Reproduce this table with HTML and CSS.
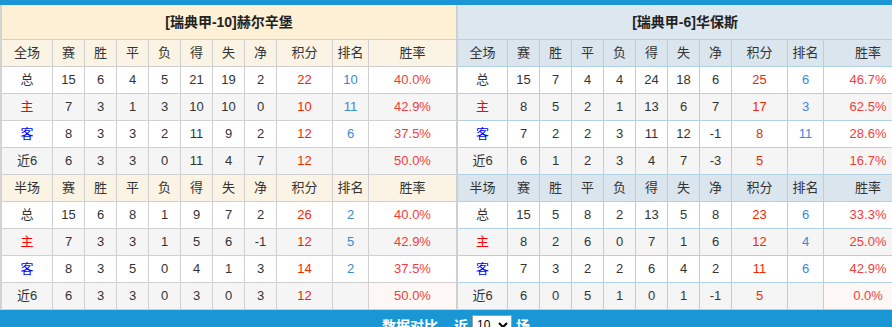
FILE: index.html
```html
<!DOCTYPE html>
<html lang="zh-CN">

<head>
    <meta charset="UTF-8">
    <meta name="viewport" content="width=device-width, initial-scale=1.0">
    <title>数据对比</title>
    <link rel="stylesheet" href="styles.css">
</head>

<body>
    <div class="wrap">
        <div class="topbar"></div>
        <div class="panels">
            <table class="stat home">
                <colgroup>
                    <col class="c-name"><col class="c-num"><col class="c-num"><col class="c-num"><col class="c-num"><col class="c-num"><col class="c-num"><col class="c-num"><col class="c-pts"><col class="c-rank"><col class="c-rate">
                </colgroup>
                <tr class="title"><th colspan="11">[瑞典甲-10]赫尔辛堡</th></tr>
                <tr class="head"><td>全场</td><td>赛</td><td>胜</td><td>平</td><td>负</td><td>得</td><td>失</td><td>净</td><td>积分</td><td>排名</td><td>胜率</td></tr>
                <tr><td>总</td><td>15</td><td>6</td><td>4</td><td>5</td><td>21</td><td>19</td><td>2</td><td class="pts">22</td><td class="rank">10</td><td class="rate">40.0%</td></tr>
                <tr class="alt"><td class="zhu">主</td><td>7</td><td>3</td><td>1</td><td>3</td><td>10</td><td>10</td><td>0</td><td class="pts">10</td><td class="rank">11</td><td class="rate">42.9%</td></tr>
                <tr><td class="ke">客</td><td>8</td><td>3</td><td>3</td><td>2</td><td>11</td><td>9</td><td>2</td><td class="pts">12</td><td class="rank">6</td><td class="rate">37.5%</td></tr>
                <tr class="alt"><td>近6</td><td>6</td><td>3</td><td>3</td><td>0</td><td>11</td><td>4</td><td>7</td><td class="pts">12</td><td class="rank"></td><td class="rate">50.0%</td></tr>
                <tr class="head"><td>半场</td><td>赛</td><td>胜</td><td>平</td><td>负</td><td>得</td><td>失</td><td>净</td><td>积分</td><td>排名</td><td>胜率</td></tr>
                <tr><td>总</td><td>15</td><td>6</td><td>8</td><td>1</td><td>9</td><td>7</td><td>2</td><td class="pts">26</td><td class="rank">2</td><td class="rate">40.0%</td></tr>
                <tr class="alt"><td class="zhu">主</td><td>7</td><td>3</td><td>3</td><td>1</td><td>5</td><td>6</td><td>-1</td><td class="pts">12</td><td class="rank">5</td><td class="rate">42.9%</td></tr>
                <tr><td class="ke">客</td><td>8</td><td>3</td><td>5</td><td>0</td><td>4</td><td>1</td><td>3</td><td class="pts">14</td><td class="rank">2</td><td class="rate">37.5%</td></tr>
                <tr class="alt"><td>近6</td><td>6</td><td>3</td><td>3</td><td>0</td><td>3</td><td>0</td><td>3</td><td class="pts">12</td><td class="rank"></td><td class="rate hl">50.0%</td></tr>
            </table>
            <table class="stat away">
                <colgroup>
                    <col class="c-name2"><col class="c-num"><col class="c-num"><col class="c-num"><col class="c-num"><col class="c-num"><col class="c-num"><col class="c-num"><col class="c-pts"><col class="c-rank"><col class="c-rate">
                </colgroup>
                <tr class="title"><th colspan="11">[瑞典甲-6]华保斯</th></tr>
                <tr class="head"><td>全场</td><td>赛</td><td>胜</td><td>平</td><td>负</td><td>得</td><td>失</td><td>净</td><td>积分</td><td>排名</td><td>胜率</td></tr>
                <tr><td>总</td><td>15</td><td>7</td><td>4</td><td>4</td><td>24</td><td>18</td><td>6</td><td class="pts">25</td><td class="rank">6</td><td class="rate">46.7%</td></tr>
                <tr class="alt"><td class="zhu">主</td><td>8</td><td>5</td><td>2</td><td>1</td><td>13</td><td>6</td><td>7</td><td class="pts">17</td><td class="rank">3</td><td class="rate">62.5%</td></tr>
                <tr><td class="ke">客</td><td>7</td><td>2</td><td>2</td><td>3</td><td>11</td><td>12</td><td>-1</td><td class="pts">8</td><td class="rank">11</td><td class="rate">28.6%</td></tr>
                <tr class="alt"><td>近6</td><td>6</td><td>1</td><td>2</td><td>3</td><td>4</td><td>7</td><td>-3</td><td class="pts">5</td><td class="rank"></td><td class="rate">16.7%</td></tr>
                <tr class="head"><td>半场</td><td>赛</td><td>胜</td><td>平</td><td>负</td><td>得</td><td>失</td><td>净</td><td>积分</td><td>排名</td><td>胜率</td></tr>
                <tr><td>总</td><td>15</td><td>5</td><td>8</td><td>2</td><td>13</td><td>5</td><td>8</td><td class="pts">23</td><td class="rank">6</td><td class="rate">33.3%</td></tr>
                <tr class="alt"><td class="zhu">主</td><td>8</td><td>2</td><td>6</td><td>0</td><td>7</td><td>1</td><td>6</td><td class="pts">12</td><td class="rank">4</td><td class="rate">25.0%</td></tr>
                <tr><td class="ke">客</td><td>7</td><td>3</td><td>2</td><td>2</td><td>6</td><td>4</td><td>2</td><td class="pts">11</td><td class="rank">6</td><td class="rate">42.9%</td></tr>
                <tr class="alt"><td>近6</td><td>6</td><td>0</td><td>5</td><td>1</td><td>0</td><td>1</td><td>-1</td><td class="pts">5</td><td class="rank"></td><td class="rate hl">0.0%</td></tr>
            </table>
        </div>
        <div class="bottom">
            <span class="label">数据对比</span>
            <span>近</span>
            <select class="count"><option>10</option><option>20</option></select>
            <span>场</span>
        </div>
    </div>
</body>

</html>
```

FILE: styles.css
```css
body {
    margin: 0;
    overflow: hidden;
    background-color: #fff;
    font-family: "Liberation Sans", "Noto Sans CJK SC", sans-serif;
    font-size: 13px;
    color: #333;
}

.wrap {
    width: 912px;
}

.topbar {
    height: 5px;
    background-color: #1b96d4;
}

.panels {
    display: flex;
}

.stat {
    table-layout: fixed;
    border-collapse: separate;
    border-spacing: 0;
}

.stat td,
.stat th {
    padding: 0;
    text-align: center;
    line-height: 26px;
    white-space: nowrap;
    overflow: hidden;
}

.stat .title th {
    line-height: 34px;
    font-size: 14px;
    font-weight: bold;
    color: #222;
}

.home {
    width: 457px;
    border-left: 2px solid #d3d3d3;
}

.away {
    width: 455px;
    border-left: 1px solid #cfcfcf;
}

.c-name { width: 51px; }
.c-name2 { width: 50px; }
.c-num { width: 32px; }
.c-pts { width: 56px; }
.c-rank { width: 36px; }
.c-rate { width: 88px; }

.home td,
.home th {
    border-right: 1px solid #d0d0d0;
    border-bottom: 1px solid #d0d0d0;
}

.away td,
.away th {
    border-right: 1px solid #b3d1e5;
    border-bottom: 1px solid #b3d1e5;
}

.home .title th { background-color: #fdf0d5; }
.home .head td { background-color: #fbf3e3; }
.away .title th { background-color: #dde7ef; }
.away .head td { background-color: #dbe5ee; }

.away .title th,
.away td:last-child {
    border-right: none;
}

.stat tr.alt td { background-color: #f5f5f5; }
.stat tr.alt td.hl { background-color: #fdf8f5; }

.zhu { color: #f00; }
.ke { color: #00f; }
.pts { color: #f32800; }
.rank { color: #3c86d6; }
.rate { color: #f33c3c; }

.bottom {
    height: 30px;
    background-color: #1b96d4;
    display: flex;
    align-items: center;
    justify-content: center;
    gap: 4px;
    color: #fff;
    font-size: 14px;
    font-weight: bold;
}

.bottom .label {
    margin-right: 12px;
}

.count {
    width: 40px;
    height: 20px;
    font-size: 12px;
    font-family: "Liberation Sans", sans-serif;
    border: 1px solid #a0a0a0;
    background-color: #fff;
    color: #000;
}
```
